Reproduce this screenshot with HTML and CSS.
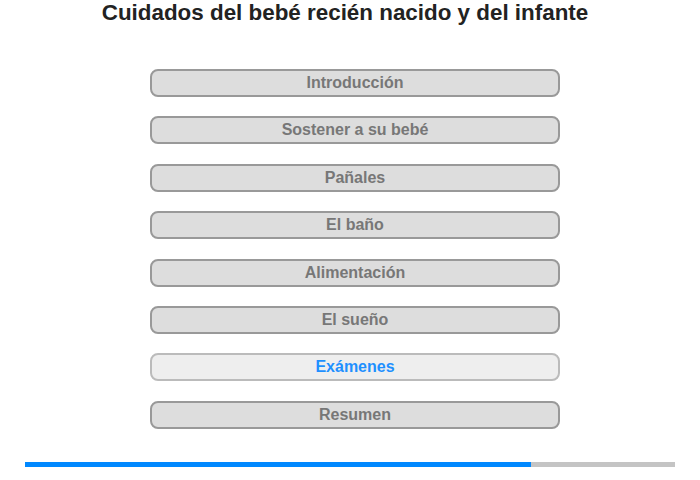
FILE: index.html
```html
<!DOCTYPE html>
<html>
<head>
<meta charset="utf-8">
<link rel="stylesheet" href="styles.css">
</head>
<body>
<h1 class="title">Cuidados del bebé recién nacido y del infante</h1>
<div class="menu">
  <div class="btn">Introducción</div>
  <div class="btn">Sostener a su bebé</div>
  <div class="btn">Pañales</div>
  <div class="btn">El baño</div>
  <div class="btn">Alimentación</div>
  <div class="btn">El sueño</div>
  <div class="btn active">Exámenes</div>
  <div class="btn">Resumen</div>
</div>
<div class="progress"><div class="fill" style="width:77.78%"></div></div>
</body>
</html>
```
FILE: styles.css
```css
html, body {
  margin: 0;
  padding: 0;
  background: #fff;
  font-family: "Liberation Sans", Arial, sans-serif;
}
.title {
  margin: 0;
  padding-top: 0;
  height: 69px;
  box-sizing: border-box;
  text-align: center;
  font-size: 22.4px;
  font-weight: bold;
  color: #222;
  padding-right: 10px;
  line-height: 26px;
}
.menu {
  margin-left: 150px;
  width: 410px;
  display: flex;
  flex-direction: column;
  gap: 19.4px;
}
.btn {
  height: 28px;
  box-sizing: border-box;
  border: 2px solid #999;
  border-radius: 8px;
  background: #ddd;
  color: #777;
  font-weight: bold;
  font-size: 16px;
  text-align: center;
  line-height: 24px;
}
.btn.active {
  background: #eee;
  border-color: #bbb;
  color: #1e90ff;
}
.progress {
  margin: 33px 0 0 25px;
  width: 650px;
  height: 5px;
  background: #c4c4c4;
}
.fill {
  height: 100%;
  background: #0088ff;
}
```
